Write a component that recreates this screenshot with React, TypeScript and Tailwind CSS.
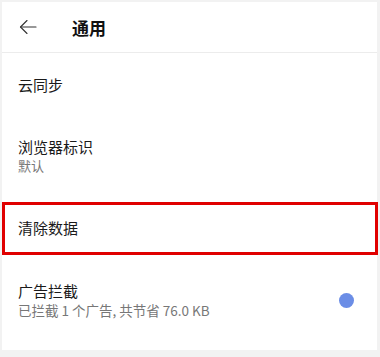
import React from 'react';

const font = { fontFamily: '"Noto Sans CJK SC", "Noto Sans", sans-serif' };

function BackArrow() {
    return (
        <svg width="18" height="16" viewBox="0 0 18 16" fill="none" stroke="#333" strokeWidth="1.1" strokeLinecap="round" strokeLinejoin="round">
            <path d="M17 8H1.5" />
            <path d="M8 1.5L1.5 8L8 14.5" />
        </svg>
    );
}

export default function App() {
    return (
        <div className="w-[380px] h-[357px] bg-[#f2f2f2] pt-[2px] pl-[2px] pr-[3px] pb-[7px] overflow-hidden" style={font}>
            <div className="bg-white h-full flex flex-col">
                {/* header */}
                <div className="h-[51px] flex items-center border-b border-[#ececec] shrink-0">
                    <div className="pl-[17px] w-[70px] flex items-center">
                        <BackArrow />
                    </div>
                    <span className="text-[17px] font-bold text-[#111] leading-none">通用</span>
                </div>

                {/* 云同步 */}
                <div className="h-[64px] flex items-center px-[16px]">
                    <span className="text-[15px] text-[#1a1a1a]">云同步</span>
                </div>

                {/* 浏览器标识 */}
                <div className="h-[85px] flex flex-col justify-center px-[16px] pb-[8px]">
                    <span className="text-[15px] text-[#1a1a1a] leading-[20px]">浏览器标识</span>
                    <span className="text-[13px] text-[#777] leading-[18px]">默认</span>
                </div>

                {/* 清除数据 (highlighted) */}
                <div className="h-[53px] flex items-center border-[3px] border-[#e00000] pl-[13px] mr-[-1px]">
                    <span className="text-[15px] text-[#1a1a1a]">清除数据</span>
                </div>

                {/* 广告拦截 */}
                <div className="flex-1 flex items-center px-[16px] pb-[4px]">
                    <div className="flex-1 flex flex-col">
                        <span className="text-[15px] text-[#1a1a1a] leading-[20px]">广告拦截</span>
                        <span className="text-[13.5px] text-[#777] leading-[19px]">已拦截 1 个广告, 共节省 76.0 KB</span>
                    </div>
                    <div className="w-[15px] h-[15px] rounded-full bg-[#6b8de6] mr-[7px]" />
                </div>
            </div>
        </div>
    );
}
